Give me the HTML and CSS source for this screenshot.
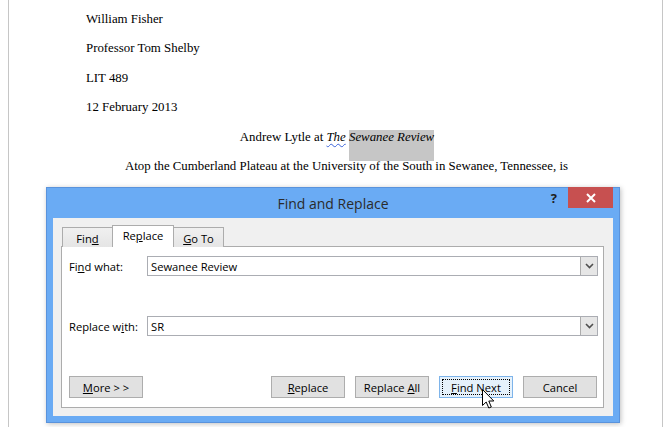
FILE: index.html
```html
<!DOCTYPE html>
<html>
<head>
<meta charset="utf-8">
<link rel="stylesheet" href="styles.css">
</head>
<body>
<div class="page">
  <div class="doc">
    <p>William Fisher</p>
    <p>Professor Tom Shelby</p>
    <p>LIT 489</p>
    <p>12 February 2013</p>
    <p class="center">Andrew Lytle at <i><span class="squig">The</span> <span class="sel">Sewanee Review</span></i></p>
    <p class="indent">Atop the Cumberland Plateau at the University of the South in Sewanee, Tennessee, is</p>
  </div>
</div>

<div class="dialog">
  <div class="titlebar">
    <div></div>
    <div class="title">Find and Replace</div>
    <div class="controls">
      <span class="help">?</span>
      <span class="close"><svg width="10" height="10" viewBox="0 0 10 10"><path d="M1 1 L9 9 M9 1 L1 9" stroke="#fff" stroke-width="2" fill="none"/></svg></span>
    </div>
  </div>
  <div class="body">
    <div class="tabs">
      <div class="tab">Fin<u>d</u></div>
      <div class="tab active">Re<u>p</u>lace</div>
      <div class="tab"><u>G</u>o To</div>
    </div>
    <div class="panel">
      <div class="field">
        <label>Fi<u>n</u>d what:</label>
        <div class="input"><span class="val">Sewanee Review</span><span class="dd"><svg width="9" height="6" viewBox="0 0 9 6"><path d="M1 1 L4.5 4.5 L8 1" stroke="#505050" stroke-width="1.6" fill="none"/></svg></span></div>
      </div>
      <div class="field second">
        <label>Replace w<u>i</u>th:</label>
        <div class="input"><span class="val">SR</span><span class="dd"><svg width="9" height="6" viewBox="0 0 9 6"><path d="M1 1 L4.5 4.5 L8 1" stroke="#505050" stroke-width="1.6" fill="none"/></svg></span></div>
      </div>
      <div class="buttons">
        <div class="btn"><span><u>M</u>ore &gt; &gt;</span></div>
        <div class="right">
          <div class="btn"><span><u>R</u>eplace</span></div>
          <div class="btn"><span>Replace <u>A</u>ll</span></div>
          <div class="btn default"><span class="focus"><u>F</u>ind Next</span></div>
          <div class="btn"><span>Cancel</span></div>
        </div>
      </div>
    </div>
  </div>
</div>

<svg class="cursor" width="13" height="20" viewBox="0 0 13 20"><path d="M0.5 0.5 L0.5 16.5 L4.2 13 L6.8 19 L9.3 18 L6.8 12 L11.8 12 Z" fill="#fff" stroke="#000" stroke-width="1" stroke-linejoin="miter"/></svg>
</body>
</html>
```
FILE: styles.css
```css
html, body {
  margin: 0;
  padding: 0;
}
body {
  width: 670px;
  height: 427px;
  overflow: hidden;
  background: #ffffff;
  position: relative;
}
.page {
  margin-left: 8px;
  width: 655px;
  height: 427px;
  box-sizing: border-box;
  border-left: 1px solid #c6c6c6;
  border-right: 1px solid #c6c6c6;
  background: #fff;
}
.doc {
  padding: 5px 0 0 77px;
  width: 502px;
  font-family: "Liberation Serif", "Times New Roman", serif;
  font-size: 12.85px;
  line-height: 29.4px;
  color: #000;
}
.doc p {
  margin: 0;
  white-space: nowrap;
}
.center {
  text-align: center;
}
.indent {
  text-indent: 39px;
}
.squig {
  text-decoration-line: underline;
  text-decoration-style: wavy;
  text-decoration-color: #3b63d8;
  text-decoration-thickness: 1px;
  text-underline-offset: 2px;
}
.sel {
  background: #c6c6c6;
  padding-bottom: 17px;
}

.dialog {
  position: absolute;
  left: 46px;
  top: 187px;
  width: 574px;
  height: 236px;
  box-sizing: border-box;
  background: #6aabf4;
  border: 1px solid #5a93dc;
  box-shadow: 1px 1px 5px rgba(0, 0, 0, 0.25);
  display: flex;
  flex-direction: column;
  font-family: "Open Sans", "Noto Sans", sans-serif;
  font-size: 11.2px;
  color: #000;
}
.titlebar {
  height: 30px;
  display: grid;
  grid-template-columns: 1fr auto 1fr;
  padding: 0 6px;
}
.title {
  font-size: 14px;
  color: #2b2b2b;
  align-self: center;
  padding-top: 1px;
}
.controls {
  justify-self: end;
  display: flex;
  align-items: flex-start;
  margin-top: -1px;
}
.help {
  font-weight: bold;
  font-size: 13px;
  color: #1e1e1e;
  margin-right: 11px;
  line-height: 20px;
  padding-top: 1px;
}
.close {
  width: 45px;
  height: 21px;
  background: #c75050;
  display: flex;
  align-items: center;
  justify-content: center;
}
.body {
  flex: 1;
  margin: 0 6px 6px;
  background: #f0f0f0;
  padding: 7px 9px 8px 8px;
  display: flex;
  flex-direction: column;
}
.tabs {
  display: flex;
  align-items: flex-end;
  height: 22px;
  margin-bottom: -1px;
  padding-left: 1px;
  position: relative;
  z-index: 1;
}
.tab {
  width: 51px;
  height: 20px;
  box-sizing: border-box;
  border: 1px solid #acacac;
  border-bottom: none;
  background: linear-gradient(#f0f0f0, #e5e5e5);
  display: flex;
  align-items: center;
  justify-content: center;
  padding-top: 2px;
}
.tab + .tab {
  margin-left: -1px;
}
.tab.active {
  width: 62px;
  height: 22px;
  background: #fff;
  padding-top: 0;
  padding-bottom: 2px;
  position: relative;
  z-index: 2;
}
.panel {
  flex: 1;
  background: #fff;
  border: 1px solid #acacac;
  padding: 9px 5px 8px 7px;
  display: flex;
  flex-direction: column;
}
.field {
  display: grid;
  grid-template-columns: 78px 1fr;
  align-items: center;
  height: 20px;
}
.field.second {
  margin-top: 40px;
}
.input {
  height: 20px;
  box-sizing: border-box;
  border: 1px solid #abadb3;
  background: #fff;
  display: flex;
  align-items: center;
  padding-left: 3px;
}
.val {
  flex: 1;
}
.dd {
  width: 17px;
  height: 18px;
  box-sizing: border-box;
  border-left: 1px solid #acacac;
  background: #e6e6e6;
  display: flex;
  align-items: center;
  justify-content: center;
}
.buttons {
  margin-top: 40px;
  display: flex;
  justify-content: space-between;
  padding-right: 1px;
}
.right {
  display: flex;
  gap: 10px;
}
.btn {
  width: 74px;
  height: 22px;
  box-sizing: border-box;
  border: 1px solid #adadad;
  background: #e1e1e1;
  display: flex;
  align-items: center;
  justify-content: center;
}
.btn.default {
  background: #e5f1fb;
  border-color: #7eb4ea;
  padding: 2px;
}
.focus {
  flex: 1;
  align-self: stretch;
  border: 1px dotted #000;
  display: flex;
  align-items: center;
  justify-content: center;
}
.cursor {
  position: absolute;
  left: 482px;
  top: 389px;
}
```
